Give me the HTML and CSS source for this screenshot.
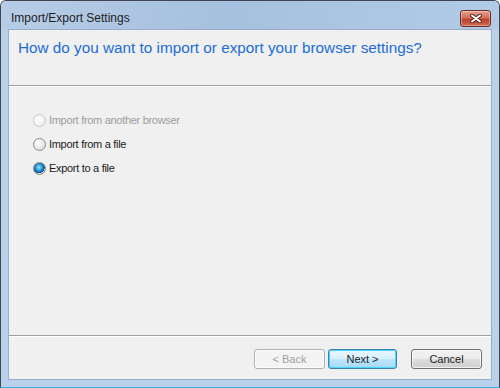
FILE: index.html
```html
<!DOCTYPE html>
<html lang="en">

<head>
  <meta charset="UTF-8" />
  <title>Import/Export Settings</title>
  <link rel="stylesheet" href="styles.css">
</head>

<body>
  <div class="window">
    <div class="titlebar">
      <span class="title">Import/Export Settings</span>
      <button class="close-btn" aria-label="Close">
        <svg width="12" height="9" viewBox="0 0 12 9">
          <path d="M2 1.5 L10 7.5 M10 1.5 L2 7.5" stroke="#4a1c14" stroke-width="3.6" stroke-linecap="round" />
          <path d="M2 1.5 L10 7.5 M10 1.5 L2 7.5" stroke="#ffffff" stroke-width="2" stroke-linecap="round" />
        </svg>
      </button>
    </div>

    <div class="client">
      <header class="header">
        <h1>How do you want to import or export your browser settings?</h1>
      </header>

      <main class="content">
        <label class="option disabled">
          <input type="radio" name="mode" disabled />
          <span>Import from another browser</span>
        </label>
        <label class="option">
          <input type="radio" name="mode" />
          <span>Import from a file</span>
        </label>
        <label class="option">
          <input type="radio" name="mode" checked />
          <span>Export to a file</span>
        </label>
      </main>

      <footer class="footer">
        <button class="btn" disabled>&lt; Back</button>
        <button class="btn default">Next &gt;</button>
        <button class="btn cancel">Cancel</button>
      </footer>
    </div>
  </div>
</body>

</html>
```

FILE: styles.css
```css
:root {
  --frame: #b9d1ea;
  --client-bg: #f0f0f0;
  --heading: #1d6dd6;
  --text: #1b1b1b;
  --muted: #9c9c9c;
}

body {
  margin: 0;
  font-family: 'Liberation Sans', Arial, sans-serif;
  font-size: 12px;
  color: var(--text);
  background: #ffffff;
}

.window {
  width: 500px;
  height: 388px;
  box-sizing: border-box;
  display: flex;
  flex-direction: column;
  border: 1px solid #3d4652;
  border-bottom-color: #2fb8dc;
  border-radius: 6px 6px 0 0;
  background: linear-gradient(180deg, #a9c2de 0%, #bad1ea 30px, #b9d1ea 100%);
  overflow: hidden;
}

.titlebar {
  height: 28px;
  box-sizing: border-box;
  display: flex;
  align-items: flex-start;
  justify-content: space-between;
  padding: 0 8px 0 10px;
  background: linear-gradient(100deg, #b7cde6 0%, #a6c0df 45%, #b2cbe7 100%);
}

.title {
  font-size: 12px;
  line-height: 14px;
  color: #1e1e1e;
  padding-top: 10px;
}

.close-btn {
  width: 31px;
  height: 17px;
  margin-top: 9px;
  padding: 0;
  display: flex;
  align-items: center;
  justify-content: center;
  border: 1px solid #6b2a22;
  border-radius: 3px;
  background: linear-gradient(180deg, #e7a08f 0%, #d0705c 45%, #b9412d 55%, #cf6a4f 100%);
  box-shadow: inset 0 0 0 1px rgba(255, 255, 255, 0.35);
}

.client {
  flex: 1;
  display: flex;
  flex-direction: column;
  margin: 0 7px 7px;
  background: var(--client-bg);
  border: 1px solid #97afcb;
}

.header {
  height: 56px;
  padding: 8px 0 0 9px;
  box-sizing: border-box;
  border-bottom: 1px solid #a0a0a0;
  box-shadow: 0 1px 0 #ffffff;
}

.header h1 {
  margin: 0;
  font-size: 15.3px;
  font-weight: normal;
  line-height: 20px;
  color: var(--heading);
}

.content {
  flex: 1;
  display: flex;
  flex-direction: column;
  gap: 8px;
  padding: 26px 0 0 24px;
}

.option {
  display: flex;
  align-items: center;
  gap: 3px;
  height: 16px;
  font-size: 11px;
  letter-spacing: -0.3px;
}

.option.disabled {
  color: var(--muted);
}

.option input {
  appearance: none;
  width: 13px;
  height: 13px;
  margin: 0;
  border-radius: 50%;
  border: 1px solid #8a8a8a;
  background: radial-gradient(circle at 35% 35%, #ffffff 0%, #e9e9e9 55%, #cfcfcf 100%);
  box-sizing: border-box;
}

.option input:disabled {
  border-color: #cacaca;
  background: radial-gradient(circle at 35% 35%, #ffffff 0%, #f2f2f2 60%, #e3e3e3 100%);
}

.option input:checked {
  background:
    radial-gradient(circle at 45% 40%, #9fe3ff 0%, #2e9ee0 35%, #0a4d8a 62%, transparent 66%),
    radial-gradient(circle at 35% 35%, #ffffff 0%, #e9e9e9 55%, #cfcfcf 100%);
}

.footer {
  height: 44px;
  box-sizing: border-box;
  display: flex;
  align-items: flex-start;
  justify-content: flex-end;
  gap: 3px;
  padding: 13px 9px 0 0;
  border-top: 1px solid #a0a0a0;
  box-shadow: inset 0 1px 0 #ffffff;
}

.btn {
  width: 71px;
  height: 20px;
  padding: 0;
  font-family: inherit;
  font-size: 11px;
  color: var(--text);
  border: 1px solid #707070;
  border-radius: 3px;
  background: linear-gradient(180deg, #f2f2f2 0%, #ebebeb 50%, #dddddd 51%, #cfcfcf 100%);
  box-shadow: inset 0 0 0 1px rgba(255, 255, 255, 0.7);
}

.btn:disabled {
  color: #a0a0a0;
  border-color: #adb2b5;
  background: #f4f4f4;
}

.btn.default {
  width: 69px;
  border-color: #3c7fb1;
  background: linear-gradient(180deg, #eaf6fd 0%, #d9f0fc 50%, #bee6fd 51%, #a7d9f5 100%);
  box-shadow: inset 0 0 0 1px #48d8fb;
}

.btn.cancel {
  margin-left: 11px;
}
```
